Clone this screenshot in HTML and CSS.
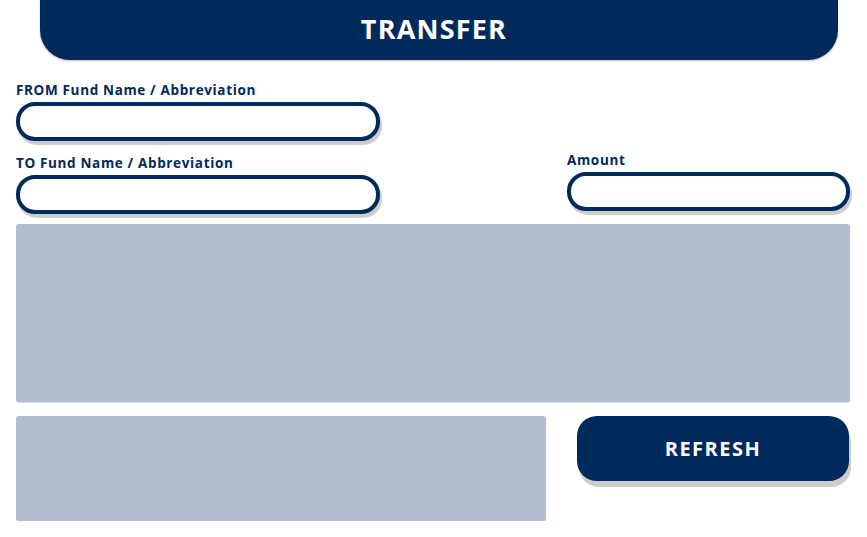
FILE: index.html
```html
<!DOCTYPE html>
<html lang="en">
<head>
<meta charset="UTF-8">
<meta name="viewport" content="width=device-width, initial-scale=1.0">
<title>Transfer</title>
<link rel="stylesheet" href="styles.css">
</head>
<body>
<header class="titleBar">
  <h1>TRANSFER</h1>
</header>
<main class="panel">
  <div class="fieldRow">
    <div class="field fundField">
      <label for="fromFund">FROM Fund Name / Abbreviation</label>
      <input type="text" id="fromFund" class="textInput">
    </div>
  </div>
  <div class="fieldRow splitRow">
    <div class="field fundField">
      <label for="toFund">TO Fund Name / Abbreviation</label>
      <input type="text" id="toFund" class="textInput">
    </div>
    <div class="field amountField">
      <label for="amount">Amount</label>
      <input type="text" id="amount" class="textInput">
    </div>
  </div>
  <div class="displayBox"></div>
  <div class="bottomRow">
    <div class="statusBox"></div>
    <button type="button" id="refreshBtn">REFRESH</button>
  </div>
</main>
</body>
</html>
```

FILE: styles.css
```css
html, body { margin:0; padding:0; }
body { font-family:"Open Sans",Arial,sans-serif; background:#fff; color:#00295c; }
.titleBar { margin:0 29px 0 40px; height:60px; background:#00295c; border-radius:0 0 30px 30px; display:flex; align-items:center; justify-content:center; box-shadow:0 1px 2px rgba(0,0,0,0.25); }
.titleBar h1 { margin:0; color:#fff; font-size:27px; font-weight:700; letter-spacing:1.2px; padding:0 10px 4px 0; }
.panel { padding:21px 17px 0 16px; display:flex; flex-direction:column; }
.fieldRow { display:flex; }
.splitRow { margin-top:10px; justify-content:space-between; align-items:flex-end; }
.field { display:flex; flex-direction:column; }
.field label { font-size:13.5px; font-weight:700; line-height:18px; letter-spacing:0.65px; margin-bottom:3px; }
.fundField { width:364px; }
.amountField { width:283px; margin-bottom:3px; }
.textInput { box-sizing:border-box; height:39px; border:4px solid #00295c; border-radius:19px; background:#fff; box-shadow:2px 4px 1px rgba(0,0,0,0.2); outline:none; padding:0 14px; font:inherit; font-size:14px; }
.displayBox { margin-top:10px; height:178px; background:#b2bdcf; border-radius:3px; box-shadow:0 1px 1px rgba(0,0,0,0.15); }
.bottomRow { margin-top:14px; display:flex; gap:31px; align-items:flex-start; }
.statusBox { width:530px; height:105px; background:#b2bdcf; border-radius:3px; box-shadow:0 1px 1px rgba(0,0,0,0.15); }
#refreshBtn { width:272px; height:65px; border:none; border-radius:20px; background:#00295c; color:#fff; font-family:inherit; font-size:20px; font-weight:700; letter-spacing:1.5px; box-shadow:2px 6px 0 #cccccc; cursor:pointer; padding:0; }
```
